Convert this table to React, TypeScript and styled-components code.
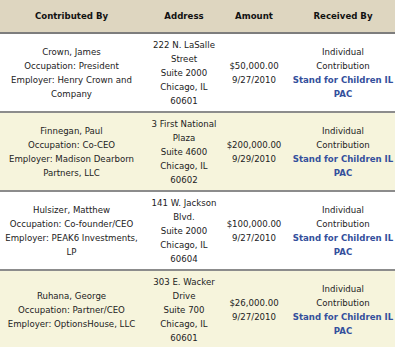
import React from 'react';
import styled, { createGlobalStyle } from 'styled-components';

const GlobalStyle = createGlobalStyle`
  html, body {
    margin: 0;
    padding: 0;
    background: #ffffff;
    overflow: hidden;
  }
  body {
    width: 395px;
    height: 347px;
    font-family: "DejaVu Sans", Verdana, sans-serif;
  }
`;

type Contribution = {
  name: string;
  occupation: string;
  employer: string;
  address: string[];
  amount: string;
  date: string;
};

const contributions: Contribution[] = [
  {
    name: 'Crown, James',
    occupation: 'President',
    employer: 'Henry Crown and Company',
    address: ['222 N. LaSalle Street', 'Suite 2000', 'Chicago, IL 60601'],
    amount: '$50,000.00',
    date: '9/27/2010',
  },
  {
    name: 'Finnegan, Paul',
    occupation: 'Co-CEO',
    employer: 'Madison Dearborn Partners, LLC',
    address: ['3 First National Plaza', 'Suite 4600', 'Chicago, IL 60602'],
    amount: '$200,000.00',
    date: '9/29/2010',
  },
  {
    name: 'Hulsizer, Matthew',
    occupation: 'Co-founder/CEO',
    employer: 'PEAK6 Investments, LP',
    address: ['141 W. Jackson Blvd.', 'Suite 2000', 'Chicago, IL 60604'],
    amount: '$100,000.00',
    date: '9/27/2010',
  },
  {
    name: 'Ruhana, George',
    occupation: 'Partner/CEO',
    employer: 'OptionsHouse, LLC',
    address: ['303 E. Wacker Drive', 'Suite 700', 'Chicago, IL 60601'],
    amount: '$26,000.00',
    date: '9/27/2010',
  },
];

const Table = styled.table`
  width: 403px;
  table-layout: fixed;
  border-collapse: collapse;
  font-size: 8.6px;
  line-height: 14px;
  color: #222222;
`;

const HeadCell = styled.th`
  height: 32px;
  padding: 0 4px;
  background: #ded6c0;
  border-bottom: 2px solid #7d7d7d;
  font-weight: bold;
  color: #111111;
  text-align: center;
  vertical-align: middle;
`;

const Row = styled.tr<{ $shaded: boolean }>`
  background: ${(p) => (p.$shaded ? '#f6f4dc' : '#ffffff')};
  border-bottom: 2px solid #8c8c8c;
`;

const Cell = styled.td<{ $pad?: number }>`
  padding: 3px ${(p) => p.$pad ?? 4}px;
  text-align: center;
  vertical-align: middle;
  height: 71px;
`;

const Line = styled.div``;

const Recipient = styled.a`
  display: block;
  color: #34509c;
  font-weight: bold;
  text-decoration: none;
`;

const App: React.FC = () => {
  return (
    <>
      <GlobalStyle />
      <Table>
        <colgroup>
          <col style={{ width: 143 }} />
          <col style={{ width: 82 }} />
          <col style={{ width: 58 }} />
          <col style={{ width: 120 }} />
        </colgroup>
        <thead>
          <tr>
            <HeadCell>Contributed By</HeadCell>
            <HeadCell>Address</HeadCell>
            <HeadCell>Amount</HeadCell>
            <HeadCell>Received By</HeadCell>
          </tr>
        </thead>
        <tbody>
          {contributions.map((c, i) => (
            <Row key={c.name} $shaded={i % 2 === 1}>
              <Cell>
                <Line>{c.name}</Line>
                <Line>{`Occupation: ${c.occupation}`}</Line>
                <Line>{`Employer: ${c.employer}`}</Line>
              </Cell>
              <Cell $pad={6}>
                {c.address.map((line, j) => (
                  <Line key={j}>{line}</Line>
                ))}
              </Cell>
              <Cell $pad={0}>
                <Line>{c.amount}</Line>
                <Line>{c.date}</Line>
              </Cell>
              <Cell $pad={3}>
                <Line>Individual</Line>
                <Line>Contribution</Line>
                <Recipient href="#">Stand for Children IL PAC</Recipient>
              </Cell>
            </Row>
          ))}
        </tbody>
      </Table>
    </>
  );
};

export default App;
